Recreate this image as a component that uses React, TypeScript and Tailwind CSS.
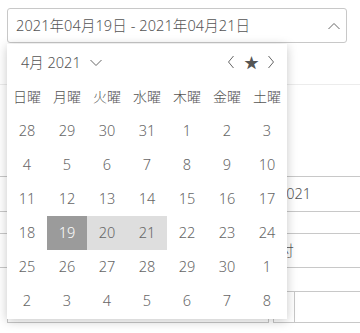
import React from "react";

const FONT = { fontFamily: '"Noto Sans", "Noto Sans CJK JP", sans-serif' };

const Chev = ({ d, w = 12, h = 8 }: { d: string; w?: number; h?: number }) => (
  <svg width={w} height={h} viewBox={`0 0 ${w} ${h}`} fill="none" stroke="#666" strokeWidth="1">
    <path d={d} />
  </svg>
);

const weeks: number[][] = [
  [28, 29, 30, 31, 1, 2, 3],
  [4, 5, 6, 7, 8, 9, 10],
  [11, 12, 13, 14, 15, 16, 17],
  [18, 19, 20, 21, 22, 23, 24],
  [25, 26, 27, 28, 29, 30, 1],
  [2, 3, 4, 5, 6, 7, 8],
];

const days = ["日曜", "月曜", "火曜", "水曜", "木曜", "金曜", "土曜"];

export default function App() {
  return (
    <div className="relative w-[360px] h-[333px] overflow-hidden bg-white text-[#555] font-light" style={FONT}>
      {/* date input */}
      <div className="pt-2 pl-[7px] pr-[13px]">
        <div className="h-[35px] border border-[#c8c8c8] rounded-[3px] flex items-center pl-2 pr-[3px]">
          <span className="text-[14.5px] leading-none flex-1 tracking-[0.1px]">2021年04月19日 - 2021年04月21日</span>
          <span className="w-[14px] flex justify-center mr-[2px]">
            <Chev d="M0.5 7 L6 1.5 L11.5 7" />
          </span>
        </div>
      </div>

      {/* background form (under popup) */}
      <div className="h-[42px] border-b border-[#ececec]" />
      <div className="mt-[91px] h-[36px] border-y border-[#c8c8c8] flex items-center pl-[278px]">
        <span className="text-[14.5px]">2021</span>
      </div>
      <div className="mt-[21px] h-[35px] border-y border-[#c8c8c8] flex items-center pl-[265px]">
        <span className="text-[14.5px]">日付</span>
      </div>
      <div className="mt-[23px] flex h-[32px] pl-[7px]">
        <div className="w-[262px] border border-[#c8c8c8]" />
        <div className="ml-[4px] flex-1 flex border-y border-l border-[#c8c8c8]">
          <div className="w-[21px] border-r border-[#c8c8c8]" />
        </div>
      </div>

      {/* calendar popup */}
      <div className="absolute left-[7px] top-[44px] w-[280px] h-[275px] bg-white shadow-[0_2px_10px_rgba(0,0,0,0.22)]">
        <div className="h-[36px] flex items-center pl-[14px] pr-[9px]">
          <span className="text-[14.5px] leading-none">4月 2021</span>
          <span className="ml-[9px] mt-[1px]">
            <Chev d="M0.5 1 L6 6.5 L11.5 1" />
          </span>
          <div className="flex-1" />
          <span className="w-[14px] flex justify-center">
            <Chev w={8} h={14} d="M6.5 1 L1.5 7 L6.5 13" />
          </span>
          <span className="ml-[6px] text-[15px] leading-none text-[#555]">★</span>
          <span className="ml-[5px] w-[14px] flex justify-center">
            <Chev w={8} h={14} d="M1.5 1 L6.5 7 L1.5 13" />
          </span>
        </div>
        <div className="grid grid-cols-7 h-[34px] items-center">
          {days.map((d) => (
            <div key={d} className="text-center text-[14px] leading-none">{d}</div>
          ))}
        </div>
        {weeks.map((row, ri) => (
          <div key={ri} className="grid grid-cols-7 h-[34px]">
            {row.map((n, ci) => {
              const sel = ri === 3 && ci === 1;
              const rng = ri === 3 && (ci === 2 || ci === 3);
              return (
                <div
                  key={ci}
                  className={
                    "flex items-center justify-center text-[14.5px] " +
                    (sel ? "bg-[#9b9b9b] text-white" : rng ? "bg-[#dedede] text-[#666]" : "text-[#666]")
                  }
                >
                  {n}
                </div>
              );
            })}
          </div>
        ))}
      </div>
    </div>
  );
}
